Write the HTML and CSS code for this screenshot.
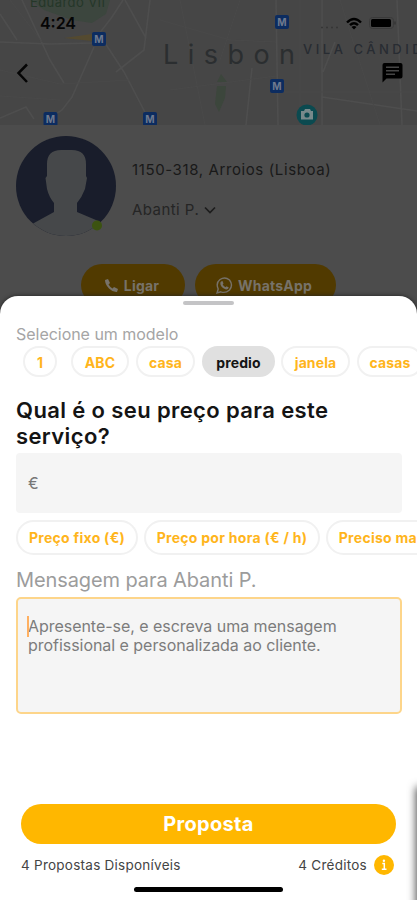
FILE: index.html
```html
<!DOCTYPE html>
<html lang="pt">
<head>
<meta charset="utf-8">
<meta name="viewport" content="width=device-width, initial-scale=1">
<title>Proposta</title>
<link rel="stylesheet" href="styles.css">
</head>
<body>
<div class="screen">
  <div class="behind">
    <svg class="map" width="417" height="125" viewBox="0 0 417 125">
      <defs>
        <g id="metro"><rect width="14" height="14" rx="2" fill="#0c2c60"/><text x="7" y="10.6" text-anchor="middle" font-size="10" font-weight="700" fill="#6f7a8e">M</text></g>
      </defs>
      <rect width="417" height="125" fill="#464646"/>
      <path d="M30 0L110 0L106 14L92 23L72 20L44 10Z" fill="#3c463e"/>
      <path d="M64 38L92 34V41Z" fill="#544a30"/>
      <path d="M221 74l6 8h-10zM217 86h9l-1 12-6 14-4-8z" fill="#3c463c"/>
      <g fill="none" stroke="#4e4e4e" stroke-width="1.6">
        <path d="M0 42L50 44L92 43L112 17L123 0M94 47L72 97L62 110L50 118M0 118L26 107L34 119M22 0L50 60L64 83M105 43L124 72L148 118M116 72L144 50L150 0M125 0L146 38M0 14L17 40M276 0L278 125M322 0V125M252 68L246 125M335 42L323 72M397 0L402 125M322 97L417 111"/>
      </g>
      <g fill="none" stroke="#494949">
        <path d="M0 70L60 84L130 80M160 20L230 40L276 42M180 0L205 125M240 0L220 60M276 92H417M340 0L352 38L380 125M170 90L276 76M300 0V125M0 96L60 100M10 0L42 42"/>
      </g>
      <text x="30" y="7" font-size="13" textLength="75" fill="#253729">Eduardo VII</text>
      <text x="163" y="63.500" font-size="27" textLength="132" fill="#2b2e30">Lisbon</text>
      <text x="303" y="54" font-size="13" font-weight="500" textLength="131" fill="#282c32">VILA CÂNDIDA</text>
      <use href="#metro" x="92" y="32"/><use href="#metro" x="43.5" y="112"/><use href="#metro" x="143" y="112"/>
      <use href="#metro" x="275" y="15"/><use href="#metro" x="270" y="79"/>
      <circle cx="307" cy="115" r="10.5" fill="#0b4a50"/>
      <path d="M301 111h3l1-2h5l1 2h2v8.500h-12z" fill="#78898b"/><circle cx="307" cy="115" r="2.600" fill="#0b4a50"/>
      <text x="40" y="28.500" font-size="16" font-weight="600" textLength="36" fill="#050505">4:24</text>
      <path d="M27 64.500L18.500 73L27 82" fill="none" stroke="#050505" stroke-width="2.500"/>
      <path d="M321 27.500h2M326 27.500h2M331 27.500h2M336 27.500h2" stroke="#363636" stroke-width="1.500"/>
      <g fill="none" stroke="#000" stroke-width="2.400"><path d="M347 22.500Q354 15.500 361 22.500"/><path d="M350 25.200Q354 21.300 358 25.200"/></g>
      <path d="M351.500 27Q354 25 356.500 27L354 29.500z"/>
      <rect x="369.500" y="17.500" width="24" height="11" rx="3" fill="none" stroke="#3a3a3a"/>
      <rect x="371" y="19" width="20" height="8" rx="1.500"/><path d="M395 21.500v3" stroke="#363636" stroke-width="1.500"/>
      <path fill-rule="evenodd" d="M384.500 63H400.500Q402.500 63 402.500 65V76.500Q402.500 78.500 400.500 78.500H386.500L382.500 82.500V65Q382.500 63 384.500 63ZM386 66.500V68H399V66.500ZM386 70V71.500H399V70ZM386 73.500V75H395V73.500Z"/>
    </svg>
    <div class="profile">
      <svg class="avatar" width="102" height="102" viewBox="0 0 102 102">
        <defs><clipPath id="round"><circle cx="51" cy="51" r="50"/></clipPath></defs>
        <g clip-path="url(#round)"><rect width="102" height="102" fill="#191d2b"/>
        <path d="M32 29Q32 15 46 15H57Q71 15 71 29V41L72 43L70 54Q67 62 62 68V77L88 88V102H12V92L19 88L39 77V68Q34 62 32 54L30.500 43L32 41Z" fill="#46484a"/></g>
        <circle cx="82" cy="90.500" r="5" fill="#3c5310"/>
      </svg>
      <div class="who">
        <div class="place">1150-318, Arroios (Lisboa)</div>
        <div class="name"><span>Abanti P.</span><svg width="12" height="8" viewBox="0 0 12 8"><path d="M1 1.500L6 6.500L11 1.500" fill="none" stroke="#1d1d1d" stroke-width="1.700"/></svg></div>
      </div>
    </div>
    <div class="contact">
      <div class="call"><svg width="15" height="15" viewBox="0 0 15 15"><path d="M1 2L4 1L6 5L4.500 6.500Q6 9 8.500 10.500L10 9L14 11L13 14Q9 14.500 5 10.500Q1 6.500 1 2Z" fill="#777269"/></svg><span>Ligar</span></div>
      <div class="call whats"><svg width="17" height="17" viewBox="0 0 17 17"><path d="M1 16L2.200 12Q-.5 6 4 2.500Q9-.8 13.500 3Q17.500 8 13.500 13Q9.500 16.500 4.800 14.800Z" fill="none" stroke="#777269" stroke-width="1.400"/><path d="M5 4.500L6.500 4L7.500 6.500L6.700 7.500Q7.500 9.300 9.500 10.200L10.500 9.200L12.800 10.400Q12 13 9.300 12.300Q4 10 4.300 5.800Z" fill="#777269"/></svg><span>WhatsApp</span></div>
    </div>
  </div>

  <main class="sheet">
    <div class="handle"></div>
    <div class="caption"><span>Selecione um modelo</span></div>
    <div class="models">
      <button class="chip one">1</button><button class="chip abc">ABC</button><button class="chip casa">casa</button><button class="chip predio">predio</button><button class="chip janela">janela</button><button class="chip casas">casas</button>
    </div>
    <h1>Qual é o seu preço para este serviço?</h1>
    <div class="price">€</div>
    <div class="rates">
      <button class="chip fixed">Preço fixo (€)</button><button class="chip hourly">Preço por hora (€ / h)</button><button class="chip more">Preciso mais</button>
    </div>
    <div class="label"><span>Mensagem para Abanti P.</span></div>
    <div class="message"><i class="caret"></i>Apresente-se, e escreva uma mensagem<br>profissional e personalizada ao cliente.</div>
    <button class="send">Proposta</button>
    <div class="foot">
      <span class="left">4 Propostas Disponíveis</span>
      <span class="credits">4 Créditos</span>
      <svg width="20" height="20" viewBox="0 0 20 20"><circle cx="10" cy="10" r="10" fill="#ffb700"/><path d="M8.300 8.500H10.300V14M7.800 14.300H12.500" fill="none" stroke="#fff" stroke-width="1.500"/><circle cx="9.900" cy="5.700" r="1.200" fill="#fff"/></svg>
    </div>
    <div class="home"></div>
    <div class="edge"></div>
  </main>
</div>
</body>
</html>
```
FILE: styles.css
```css
* { box-sizing: border-box; }
body { margin: 0; font-family: Inter, "Liberation Sans", sans-serif; }
button { font: inherit; }
.screen { position: relative; width: 417px; height: 900px; overflow: hidden; background: #4c4c4c; }
.map { display: block; }
.profile { display: flex; padding: 10px 0 0 15px; height: 139px; }
.who { padding: 23px 0 0 15px; color: #191919; white-space: nowrap; }
.place { height: 40px; line-height: 24px; font-size: 15px; letter-spacing: .61px; }
.name { display: flex; align-items: center; gap: 5px; line-height: 24px; font-size: 15px; letter-spacing: .45px; color: #252525; }
.contact { display: flex; gap: 10px; padding-left: 81px; }
.call { display: flex; align-items: center; justify-content: center; gap: 5px; width: 104px; height: 42px; padding-right: 3px; border-radius: 21px; background: #513a00; color: #777269; font-size: 14px; font-weight: 700; letter-spacing: .2px; }
.whats { width: 141px; }
.sheet { position: absolute; left: 0; top: 296px; width: 417px; height: 604px; padding: 5px 16px 0; background: #fff; border-radius: 18px 18px 0 0; overflow: hidden; box-shadow: 0 0 4px #222; display: flex; flex-direction: column; }
.handle { flex: none; align-self: center; width: 51px; height: 4px; border-radius: 2px; background: #c4c4c6; }
.caption { margin-top: 19px; height: 22px; line-height: 20px; font-size: 16px; color: #a5a5a5; letter-spacing: -.03px; }
.models, .rates { display: flex; flex: none; white-space: nowrap; }
.models { height: 31px; padding-left: 7px; }
.chip { flex: none; padding: 0; border: 2px solid #f1f1f1; border-radius: 18px; background: #fff; color: #ffb51c; font-size: 14px; font-weight: 700; letter-spacing: .1px; }
.models .chip { padding-top: 1px; }
.one { width: 34px; margin-right: 14px; }
.abc { width: 58px; margin-right: 7px; }
.casa { width: 59px; margin-right: 7px; }
.predio { width: 73px; margin-right: 6px; }
.models .predio { background: #e0e0e0; border-color: #e0e0e0; color: #151515; }
.janela { width: 69px; margin-right: 7px; }
.casas { width: 66px; }
h1 { margin: 20px 0 0; height: 56px; font-size: 22px; font-weight: 600; line-height: 26px; letter-spacing: .38px; color: #141414; }
.price { flex: none; width: 386px; height: 60px; padding-left: 12px; border-radius: 4px; background: #f5f5f5; color: #777; font-size: 16px; line-height: 60px; }
.rates { height: 35px; margin-top: 7px; gap: 6px; }
.rates .chip { letter-spacing: .28px; }
.fixed { width: 122px; }
.hourly { width: 176px; }
.more { width: 116px; }
.label { margin-top: 13px; height: 29px; font-size: 20px; line-height: 24px; color: #9c9c9c; letter-spacing: -.1px; white-space: nowrap; }
.message { position: relative; flex: none; width: 386px; height: 117px; padding: 17.5px 10px; border: 2px solid #fdd58a; border-radius: 5px; background: #f5f5f5; color: #7c7c7c; font-size: 16px; line-height: 19px; letter-spacing: -.04px; white-space: nowrap; }
.caret { position: absolute; left: 9px; top: 17px; width: 2px; height: 21px; background: #ffb061; }
.send { flex: none; width: 375px; height: 40px; margin: 90px 0 0 5px; padding: 0; border: 0; border-radius: 20px; background: #ffb700; color: #fff; font-size: 20px; font-weight: 700; letter-spacing: .3px; }
.foot { display: flex; align-items: center; height: 20px; margin: 11px 7px 0 5px; font-size: 13.5px; color: #444; letter-spacing: .25px; white-space: nowrap; }
.credits { margin: 0 7px 0 auto; }
.home { flex: none; align-self: center; width: 149px; height: 5px; margin-top: 12px; border-radius: 3px; background: #000; }
.edge { position: absolute; left: 417px; top: 492px; width: 20px; height: 140px; box-shadow: 0 0 8px 1px rgba(0,0,0,.7); }
```
